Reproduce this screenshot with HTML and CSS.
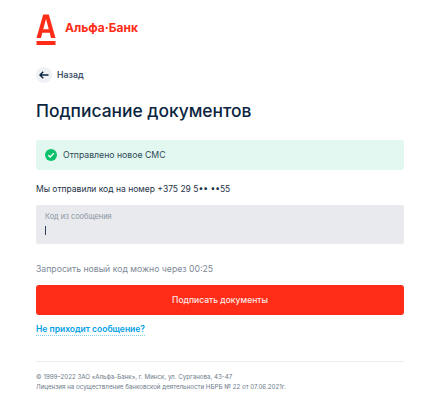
FILE: index.html
```html
<!DOCTYPE html>
<html lang="ru">
<head>
  <meta charset="UTF-8" />
  <meta name="viewport" content="width=device-width, initial-scale=1.0"/>
  <title>Подписание документов</title>
  <link rel="stylesheet" href="styles.css">
</head>
<body>
  <div class="container">
    <header class="logo">
      <svg class="logo-mark" width="20" height="31" viewBox="0 0 20 31">
        <path d="M0.5 24 L7.2 0.5 H12.8 L19.5 24 H15 L13.7 18.8 H6.3 L5 24 Z M7.2 15.3 H12.8 L10.1 5.2 H9.9 Z" fill="#ff2d17" fill-rule="evenodd"/>
        <rect x="0.5" y="27" width="19" height="4" fill="#ff2d17"/>
      </svg>
      <span class="logo-text">Альфа·Банк</span>
    </header>

    <a class="back" href="#">
      <span class="back-circle">
        <svg width="10" height="8" viewBox="0 0 10 8">
          <path d="M4.2 0.8 L1 4 L4.2 7.2 M1 4 H9.5" fill="none" stroke="#0b2540" stroke-width="1.5"/>
        </svg>
      </span>
      Назад
    </a>

    <h1>Подписание документов</h1>

    <div class="alert">
      <svg width="12" height="12" viewBox="0 0 12 12">
        <circle cx="6" cy="6" r="6" fill="#0cc16b"/>
        <path d="M3.3 6.2 L5.2 8 L8.8 4.3" fill="none" stroke="#fff" stroke-width="1.3"/>
      </svg>
      Отправлено новое СМС
    </div>

    <p class="phone">Мы отправили код на номер +375 29 5•• ••55</p>

    <div class="field">
      <label for="code">Код из сообщения</label>
      <span class="caret"></span>
    </div>

    <p class="timer">Запросить новый код можно через 00:25</p>

    <button class="sign-btn">Подписать документы</button>

    <a class="help" href="#">Не приходит сообщение?</a>

    <footer class="footer">
      <p>© 1999–2022 ЗАО «Альфа-Банк», г. Минск, ул. Сурганова, 43-47</p>
      <p>Лицензия на осуществление банковской деятельности НБРБ № 22 от 07.06.2021г.</p>
    </footer>
  </div>
</body>
</html>
```

FILE: styles.css
```css
* {
  box-sizing: border-box;
  font-family: Inter, "Liberation Sans", sans-serif;
}

body {
  background: #ffffff;
  margin: 0;
}

.container {
  width: 368px;
  margin-left: 36px;
  padding-top: 14px;
}

.logo {
  display: flex;
  align-items: center;
  gap: 9px;
  height: 31px;
}

.logo-mark {
  display: block;
}

.logo-text {
  color: #ff2d17;
  font-size: 12px;
  font-weight: 700;
  position: relative;
  top: -2px;
}

.back {
  display: flex;
  align-items: center;
  gap: 5px;
  margin-top: 22px;
  height: 16px;
  color: #3d5068;
  font-size: 8.7px;
  font-weight: 600;
  text-decoration: none;
}

.back-circle {
  display: flex;
  justify-content: center;
  align-items: center;
  width: 16px;
  height: 16px;
  border-radius: 50%;
  background: #eff1f4;
}

h1 {
  margin: 16px 0 0;
  color: #0b2540;
  font-size: 17.4px;
  font-weight: 500;
  line-height: 24px;
}

.alert {
  display: flex;
  align-items: center;
  gap: 6px;
  margin-top: 17px;
  height: 30px;
  padding-left: 9px;
  background: #e2f7ef;
  border-radius: 3px;
  color: #2f4a58;
  font-size: 8.7px;
}

.phone {
  margin: 14px 0 0;
  color: #1d3146;
  font-size: 8.5px;
  line-height: 11px;
}

.field {
  margin-top: 10px;
  height: 39px;
  padding: 8px 9px 0;
  background: #e9eaed;
  border-radius: 2px;
}

.field label {
  display: block;
  color: #8a95a3;
  font-size: 7.4px;
  line-height: 8px;
}

.caret {
  display: block;
  width: 1px;
  height: 9px;
  margin-top: 5px;
  background: #33445a;
}

.timer {
  margin: 19px 0 0;
  color: #7d8997;
  font-size: 8.7px;
  line-height: 12px;
}

.sign-btn {
  display: block;
  width: 100%;
  height: 30px;
  margin-top: 10px;
  background: #ff2d17;
  color: #ffe9e6;
  border: none;
  border-radius: 3px;
  font-size: 8.5px;
  font-weight: 500;
}

.help {
  display: inline-block;
  margin-top: 9px;
  color: #00a0e6;
  font-size: 8.5px;
  font-weight: 600;
  line-height: 11px;
  text-decoration: none;
  border-bottom: 1px dotted #7fcff2;
}

.footer {
  margin-top: 25px;
  padding-top: 10px;
  border-top: 1px solid #eceef0;
  color: #6d7a89;
  font-size: 6.2px;
  line-height: 10px;
}

.footer p {
  margin: 0;
}
```
